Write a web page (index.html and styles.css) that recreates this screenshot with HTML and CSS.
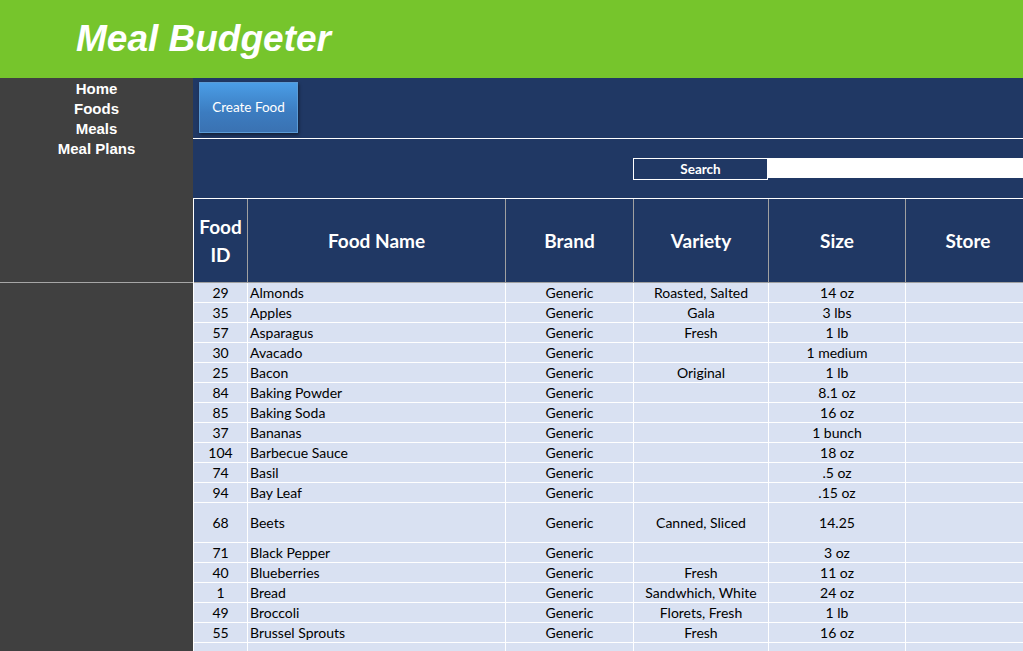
FILE: index.html
```html
<!DOCTYPE html>
<html>
<head>
<meta charset="utf-8">
<title>Meal Budgeter</title>
<link rel="stylesheet" href="styles.css">
</head>
<body>
<div class="app">
  <header class="banner"><h1 class="title">Meal Budgeter</h1></header>
  <aside class="sidebar">
    <nav class="nav">
      <a class="nav-link">Home</a>
      <a class="nav-link">Foods</a>
      <a class="nav-link">Meals</a>
      <a class="nav-link">Meal Plans</a>
    </nav>
  </aside>
  <main class="main">
    <div class="toolbar"><button class="btn">Create Food</button></div>
    <div class="search-area">
      <div class="search-row">
        <div class="search-label">Search</div>
        <div class="search-input"></div>
      </div>
    </div>
    <div class="table">
      <div class="row head">
        <div class="cell">Food<br>ID</div>
        <div class="cell">Food Name</div>
        <div class="cell">Brand</div>
        <div class="cell">Variety</div>
        <div class="cell">Size</div>
        <div class="cell">Store</div>
      </div>
      <div class="row"><div class="cell">29</div><div class="cell name">Almonds</div><div class="cell">Generic</div><div class="cell">Roasted, Salted</div><div class="cell">14 oz</div><div class="cell"></div></div>
      <div class="row"><div class="cell">35</div><div class="cell name">Apples</div><div class="cell">Generic</div><div class="cell">Gala</div><div class="cell">3 lbs</div><div class="cell"></div></div>
      <div class="row"><div class="cell">57</div><div class="cell name">Asparagus</div><div class="cell">Generic</div><div class="cell">Fresh</div><div class="cell">1 lb</div><div class="cell"></div></div>
      <div class="row"><div class="cell">30</div><div class="cell name">Avacado</div><div class="cell">Generic</div><div class="cell"></div><div class="cell">1 medium</div><div class="cell"></div></div>
      <div class="row"><div class="cell">25</div><div class="cell name">Bacon</div><div class="cell">Generic</div><div class="cell">Original</div><div class="cell">1 lb</div><div class="cell"></div></div>
      <div class="row"><div class="cell">84</div><div class="cell name">Baking Powder</div><div class="cell">Generic</div><div class="cell"></div><div class="cell">8.1 oz</div><div class="cell"></div></div>
      <div class="row"><div class="cell">85</div><div class="cell name">Baking Soda</div><div class="cell">Generic</div><div class="cell"></div><div class="cell">16 oz</div><div class="cell"></div></div>
      <div class="row"><div class="cell">37</div><div class="cell name">Bananas</div><div class="cell">Generic</div><div class="cell"></div><div class="cell">1 bunch</div><div class="cell"></div></div>
      <div class="row"><div class="cell">104</div><div class="cell name">Barbecue Sauce</div><div class="cell">Generic</div><div class="cell"></div><div class="cell">18 oz</div><div class="cell"></div></div>
      <div class="row"><div class="cell">74</div><div class="cell name">Basil</div><div class="cell">Generic</div><div class="cell"></div><div class="cell">.5 oz</div><div class="cell"></div></div>
      <div class="row"><div class="cell">94</div><div class="cell name">Bay Leaf</div><div class="cell">Generic</div><div class="cell"></div><div class="cell">.15 oz</div><div class="cell"></div></div>
      <div class="row tall"><div class="cell">68</div><div class="cell name">Beets</div><div class="cell">Generic</div><div class="cell">Canned, Sliced</div><div class="cell">14.25</div><div class="cell"></div></div>
      <div class="row"><div class="cell">71</div><div class="cell name">Black Pepper</div><div class="cell">Generic</div><div class="cell"></div><div class="cell">3 oz</div><div class="cell"></div></div>
      <div class="row"><div class="cell">40</div><div class="cell name">Blueberries</div><div class="cell">Generic</div><div class="cell">Fresh</div><div class="cell">11 oz</div><div class="cell"></div></div>
      <div class="row"><div class="cell">1</div><div class="cell name">Bread</div><div class="cell">Generic</div><div class="cell">Sandwhich, White</div><div class="cell">24 oz</div><div class="cell"></div></div>
      <div class="row"><div class="cell">49</div><div class="cell name">Broccoli</div><div class="cell">Generic</div><div class="cell">Florets, Fresh</div><div class="cell">1 lb</div><div class="cell"></div></div>
      <div class="row"><div class="cell">55</div><div class="cell name">Brussel Sprouts</div><div class="cell">Generic</div><div class="cell">Fresh</div><div class="cell">16 oz</div><div class="cell"></div></div>
      <div class="row"><div class="cell"></div><div class="cell name"></div><div class="cell"></div><div class="cell"></div><div class="cell"></div><div class="cell"></div></div>
    </div>
  </main>
</div>
</body>
</html>
```

FILE: styles.css
```css
* { box-sizing: border-box; }
html, body {
  margin: 0;
  padding: 0;
  width: 1023px;
  height: 651px;
  overflow: hidden;
  background: #404040;
}
.app {
  display: grid;
  grid-template-columns: 193px 830px;
  grid-template-rows: 78px 1fr;
  width: 1023px;
  height: 651px;
}
.banner {
  grid-column: 1 / 3;
  background: #76c52c;
  display: flex;
  align-items: center;
  padding-left: 76px;
}
.title {
  margin: 0;
  font-family: "Liberation Sans", Arial, sans-serif;
  font-weight: bold;
  font-style: italic;
  font-size: 37px;
  line-height: 1;
  color: #ffffff;
  padding-bottom: 1px;
}
.sidebar {
  background: #404040;
}
.nav {
  display: flex;
  flex-direction: column;
  align-items: center;
  height: 205px;
  padding-top: 1px;
  border-bottom: 1px solid #a6a6a6;
}
.nav-link {
  font-family: "Liberation Sans", Arial, sans-serif;
  font-weight: bold;
  font-size: 15px;
  line-height: 20px;
  color: #ffffff;
}
.main {
  background: #203864;
  overflow: hidden;
  min-width: 0;
}
.toolbar {
  height: 61px;
  padding: 4px 0 0 6px;
  border-bottom: 1px solid #ffffff;
}
.btn {
  display: block;
  width: 99px;
  height: 51px;
  border: 1px solid #5b9bd5;
  background: linear-gradient(#4a9de6, #3c7cc0 60%, #3a72b2);
  box-shadow: 1px 2px 3px rgba(0, 0, 0, 0.45);
  color: #ffffff;
  font-family: Lato, "Open Sans", sans-serif;
  font-size: 13.5px;
  padding: 0 0 1px 0;
}
.search-area {
  height: 59px;
  padding-top: 19px;
}
.search-row {
  display: grid;
  grid-template-columns: 440px 135px 1fr;
  height: 21px;
}
.search-label {
  grid-column: 2;
  border: 1px solid #ffffff;
  color: #ffffff;
  font-family: Lato, "Open Sans", sans-serif;
  font-weight: bold;
  font-size: 13.5px;
  line-height: 19px;
  padding-top: 1px;
  text-align: center;
}
.search-input {
  background: #ffffff;
  height: 20px;
}
.table {
  background: #ffffff;
  padding: 1px 0 0 1px;
  display: flex;
  flex-direction: column;
  gap: 1px;
  width: 840px;
}
.row {
  display: grid;
  grid-template-columns: 53px 257px 127px 134px 136px 124px;
  column-gap: 1px;
  height: 19px;
}
.row.tall { height: 39px; }
.row.head {
  height: 84px;
  border-bottom: 1px solid #a0a0a0;
  margin-bottom: -1px;
  background: #a0a0a0;
}
.cell {
  background: #d9e1f2;
  color: #000000;
  font-family: Lato, "Open Sans", sans-serif;
  font-size: 14px;
  line-height: 18px;
  padding-top: 1px;
  text-align: center;
  display: flex;
  align-items: center;
  justify-content: center;
  white-space: nowrap;
}
.cell.name {
  justify-content: flex-start;
  padding-left: 2px;
}
.head .cell {
  background: #203864;
  color: #ffffff;
  font-weight: bold;
  font-size: 19px;
  line-height: 28px;
  height: 83px;
}
```
